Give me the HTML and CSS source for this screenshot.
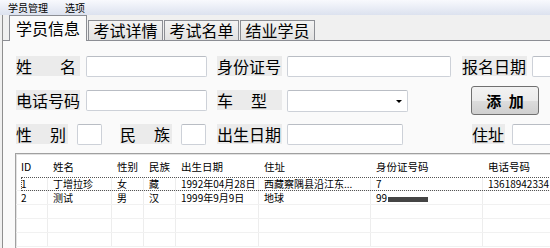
FILE: index.html
```html
<!DOCTYPE html>
<html lang="zh-CN">
<head>
    <meta charset="UTF-8">
    <title>学员管理</title>
    <link rel="stylesheet" href="styles.css">
</head>
<body>

<div class="menubar">
    <span>学员管理</span>
    <span>选项</span>
</div>

<div class="window">
    <div class="tabs">
        <div class="tab active">学员信息</div>
        <div class="tab">考试详情</div>
        <div class="tab">考试名单</div>
        <div class="tab">结业学员</div>
    </div>

    <div class="panel">
        <div class="row">
            <span class="lbl lbl-name spread">姓名</span>
            <input class="box w121 mr10" type="text">
            <span class="lbl lbl-long">身份证号</span>
            <input class="box w164 mr11" type="text">
            <span class="lbl lbl-long">报名日期</span>
            <input class="box w60" type="text">
        </div>

        <div class="row">
            <span class="lbl lbl-long mr6">电话号码</span>
            <input class="box w121 mr10" type="text">
            <span class="lbl lbl-car spread">车型</span>
            <div class="box select w121"><span class="arrow"></span></div>
            <button class="btn-add">添 加</button>
        </div>

        <div class="row">
            <span class="lbl lbl-short spread">性别</span>
            <input class="box w25 mr18" type="text">
            <span class="lbl lbl-short spread">民族</span>
            <input class="box w25 mr11" type="text">
            <span class="lbl lbl-long">出生日期</span>
            <input class="box w116" type="text">
            <span class="lbl lbl-addr">住址</span>
            <input class="box w60" type="text">
        </div>

        <div class="grid">
            <div class="grid-row head">
                <span>ID</span><span>姓名</span><span>性别</span><span>民族</span>
                <span>出生日期</span><span>住址</span><span>身份证号码</span><span>电话号码</span>
            </div>
            <div class="grid-row focus">
                <span>1</span><span>丁增拉珍</span><span>女</span><span>藏</span>
                <span>1992年04月28日</span><span>西藏察隅县沿江东...</span><span>7</span><span>13618942334</span>
            </div>
            <div class="grid-row">
                <span>2</span><span>测试</span><span>男</span><span>汉</span>
                <span>1999年9月9日</span><span>地球</span><span>99<i class="mask"></i></span><span></span>
            </div>
            <div class="grid-row"><span></span><span></span><span></span><span></span><span></span><span></span><span></span><span></span></div>
            <div class="grid-row"><span></span><span></span><span></span><span></span><span></span><span></span><span></span><span></span></div>
            <div class="grid-row"><span></span><span></span><span></span><span></span><span></span><span></span><span></span><span></span></div>
        </div>
    </div>
</div>

</body>
</html>
```

FILE: styles.css
```css
* {
    box-sizing: border-box;
}

body {
    margin: 0;
    width: 550px;
    height: 248px;
    overflow: hidden;
    background: #f0f0f0;
    font-family: "Noto Sans CJK SC", sans-serif;
    color: #000;
}

.menubar {
    height: 15px;
    display: flex;
    gap: 17px;
    padding-left: 8px;
    font-size: 10px;
    line-height: 15px;
    background: linear-gradient(#f8f9fd, #dce2ef);
}

.window {
    margin-left: 2px;
    border-left: 1px solid #8f8f8f;
    height: 233px;
    display: flex;
    flex-direction: column;
}

/* tab strip */
.tabs {
    display: flex;
    align-items: flex-end;
    height: 25px;
    padding-left: 6px;
}

.tab {
    width: 75px;
    height: 20px;
    margin-left: 1px;
    border: 1px solid #8c8e94;
    border-bottom: none;
    background: linear-gradient(#f3f3f3, #e2e2e2);
    font-size: 16px;
    line-height: 19px;
    text-align: center;
}

.tab.active {
    width: 78px;
    height: 26px;
    margin: 0 0 -1px 0;
    padding-top: 3px;
    background: #fafafa;
    position: relative;
    z-index: 1;
}

.panel {
    flex: 1;
    border-top: 1px solid #8c8e94;
    background: #fafafa;
    padding: 15px 0 0 13px;
    overflow: hidden;
}

/* form rows */
.row {
    display: flex;
    align-items: flex-start;
    height: 20px;
    margin-bottom: 14px;
}

.lbl {
    height: 20px;
    background: #ebebeb;
    font-size: 16px;
    line-height: 20px;
    white-space: nowrap;
    flex-shrink: 0;
}

.spread {
    text-align: justify;
    text-align-last: justify;
}

.lbl-name { width: 64px; padding-right: 4px; margin-right: 6px; }
.lbl-long { width: 65px; margin-right: 5px; }
.lbl-car { width: 65px; padding-right: 15px; margin-right: 5px; }
.lbl-short { width: 52px; padding-right: 2px; margin-right: 9px; }
.lbl-addr { width: 33px; margin: 0 7px 0 69px; }

.row .lbl-long:first-child { width: 64px; }

.box {
    height: 21px;
    border: 1px solid #cdd1d8;
    border-top-color: #b9bdc4;
    border-radius: 2px;
    background: #fff;
    padding: 0;
    margin: 0;
    flex-shrink: 0;
}

.w25 { width: 25px; }
.w60 { width: 60px; }
.w116 { width: 116px; }
.w121 { width: 121px; }
.w164 { width: 164px; }

.mr6 { margin-right: 6px; }
.mr10 { margin-right: 10px; }
.mr11 { margin-right: 11px; }
.mr18 { margin-right: 18px; }

.select {
    height: 22px;
    display: flex;
    align-items: center;
    justify-content: flex-end;
    padding-right: 5px;
}

.arrow {
    width: 0;
    height: 0;
    border-left: 3px solid transparent;
    border-right: 3px solid transparent;
    border-top: 3px solid #000;
}

.btn-add {
    width: 68px;
    height: 29px;
    margin: -4px 0 0 63px;
    border: 1px solid #707070;
    border-radius: 3px;
    background: linear-gradient(#f2f2f2 0%, #ebebeb 50%, #dddddd 50%, #cfcfcf 100%);
    font-family: "Noto Sans CJK SC", sans-serif;
    font-size: 15px;
    font-weight: bold;
    word-spacing: 4px;
    line-height: 26px;
    padding: 0;
    flex-shrink: 0;
}

/* list view */
.grid {
    margin: -5px 0 0 -1px;
    width: 540px;
    height: 100px;
    background: #fff;
    border-top: 1px solid #a0a0a0;
    border-left: 1px solid #a0a0a0;
    box-shadow: inset 1px 1px #e2e2e2;
    overflow: hidden;
}

.grid-row {
    display: grid;
    grid-template-columns: 32px 64px 32px 32px 83px 112px 112px 112px;
    height: 14px;
    font-size: 10px;
    line-height: 13px;
    border-bottom: 1px solid #f1f1f1;
    position: relative;
}

.grid-row span {
    padding-left: 5px;
    white-space: nowrap;
    overflow: hidden;
    border-right: 1px solid #ededed;
}

.grid-row.head {
    height: 23px;
    font-size: 10.5px;
    line-height: 14px;
    padding-top: 6px;
    border-bottom: none;
}

.grid-row.head span {
    border-right: none;
}

.grid-row.focus::before {
    content: "";
    position: absolute;
    left: 5px;
    top: 0;
    right: 0;
    bottom: -1px;
    border: 1px dotted #555;
}

.mask {
    display: inline-block;
    width: 40px;
    height: 5px;
    margin-left: 1px;
    background: #444;
    vertical-align: middle;
}
```
